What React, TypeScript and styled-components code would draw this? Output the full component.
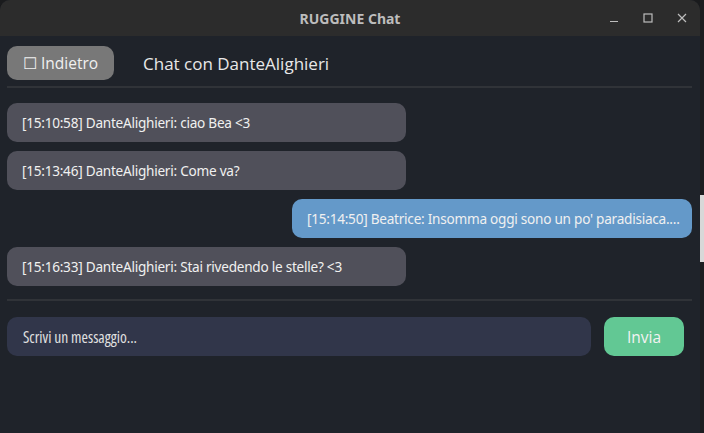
import styled, { createGlobalStyle } from 'styled-components'

const GlobalStyle = createGlobalStyle`
  html, body {
    margin: 0;
    padding: 0;
    background: #1a1b1d;
  }
  body {
    font-family: 'Noto Sans', 'DejaVu Sans', sans-serif;
  }
`

type Message = {
  time: string
  author: string
  text: string
  mine?: boolean
}

const messages: Message[] = [
  { time: '15:10:58', author: 'DanteAlighieri', text: 'ciao Bea <3' },
  { time: '15:13:46', author: 'DanteAlighieri', text: 'Come va?' },
  { time: '15:14:50', author: 'Beatrice', text: "Insomma oggi sono un po' paradisiaca....", mine: true },
  { time: '15:16:33', author: 'DanteAlighieri', text: 'Stai rivedendo le stelle? <3' },
]

const uiFont = `'Open Sans', 'Noto Sans', sans-serif`

export default function App() {
  return (
    <>
      <GlobalStyle />
      <Desktop>
        <Window>
          <TitleBar>
            <Title>RUGGINE Chat</Title>
            <Controls>
              <ControlButton aria-label="minimize">
                <svg width="10" height="10" viewBox="0 0 10 10">
                  <path d="M1 8.5h8" stroke="#bdbdbd" strokeWidth="1.2" />
                </svg>
              </ControlButton>
              <ControlButton aria-label="maximize">
                <svg width="10" height="10" viewBox="0 0 10 10">
                  <rect x="1" y="1" width="8" height="8" fill="none" stroke="#bdbdbd" strokeWidth="1.2" />
                </svg>
              </ControlButton>
              <ControlButton aria-label="close">
                <svg width="10" height="10" viewBox="0 0 10 10">
                  <path d="M1 1l8 8M9 1l-8 8" stroke="#bdbdbd" strokeWidth="1.2" />
                </svg>
              </ControlButton>
            </Controls>
          </TitleBar>

          <Body>
            <Header>
              <BackButton>☐ Indietro</BackButton>
              <ChatTitle>Chat con DanteAlighieri</ChatTitle>
            </Header>
            <Divider $top={6} />

            <MessageList>
              {messages.map((m) => (
                <Bubble key={m.time} $mine={m.mine}>
                  [{m.time}] {m.author}: {m.text}
                </Bubble>
              ))}
            </MessageList>
            <Divider $top={0} />

            <Composer>
              <MessageInput placeholder="Scrivi un messaggio..." />
              <SendButton>Invia</SendButton>
            </Composer>
          </Body>
        </Window>
        <Edge>
          <EdgeGlimpse />
        </Edge>
      </Desktop>
    </>
  )
}

const Desktop = styled.div`
  display: flex;
  width: 704px;
  height: 433px;
  overflow: hidden;
`

const Window = styled.div`
  display: flex;
  flex-direction: column;
  width: 700px;
  height: 433px;
  border-radius: 10px 10px 0 0;
  overflow: hidden;
  background: #1f232a;
`

const TitleBar = styled.div`
  position: relative;
  display: flex;
  align-items: center;
  justify-content: center;
  height: 36px;
  flex-shrink: 0;
  background: #2c2c2c;
`

const Title = styled.div`
  font-family: 'Noto Sans', sans-serif;
  font-weight: 700;
  font-size: 14px;
  color: #bdbdbd;
`

const Controls = styled.div`
  position: absolute;
  right: 9px;
  top: 0;
  bottom: 0;
  display: flex;
  align-items: center;
  gap: 16px;
`

const ControlButton = styled.div`
  display: flex;
  align-items: center;
  justify-content: center;
  width: 18px;
  height: 18px;
`

const Body = styled.div`
  display: flex;
  flex-direction: column;
  padding: 10px 8px 0 7px;
`

const Header = styled.div`
  display: flex;
  align-items: center;
  gap: 29px;
  height: 34px;
`

const BackButton = styled.button`
  height: 34px;
  width: 107px;
  border: none;
  border-radius: 10px;
  background: #787878;
  color: #f0f0f0;
  font-family: ${uiFont};
  font-size: 15.5px;
  padding: 0;
`

const ChatTitle = styled.div`
  font-family: ${uiFont};
  font-size: 17px;
  color: #e8e8e8;
`

const Divider = styled.hr<{ $top: number }>`
  margin: ${(p) => p.$top}px 0 0;
  height: 2px;
  border: none;
  background: #303338;
`

const MessageList = styled.div`
  display: flex;
  flex-direction: column;
  gap: 9px;
  padding: 15px 0 13px;
`

const Bubble = styled.div<{ $mine?: boolean }>`
  display: flex;
  align-items: center;
  box-sizing: border-box;
  width: ${(p) => (p.$mine ? '400px' : '399px')};
  height: 39px;
  padding: 0 15px;
  align-self: ${(p) => (p.$mine ? 'flex-end' : 'flex-start')};
  border-radius: 10px;
  background: ${(p) => (p.$mine ? '#6499c9' : '#50505a')};
  color: #f0f0f0;
  font-family: 'Noto Sans', sans-serif;
  font-size: 13.6px;
  letter-spacing: -0.25px;
  white-space: nowrap;
  overflow: hidden;
`

const Composer = styled.div`
  display: flex;
  align-items: center;
  gap: 13px;
  margin-top: 16px;
  padding-right: 8px;
`

const MessageInput = styled.input`
  flex: 1;
  height: 39px;
  box-sizing: border-box;
  border: none;
  border-radius: 10px;
  background: #31364a;
  padding: 0 16px;
  font-family: ${uiFont};
  font-stretch: 75%;
  font-size: 15.5px;
  color: #e6e6e6;
  outline: none;

  &::placeholder {
    color: #e0e0e0;
  }
`

const SendButton = styled.button`
  width: 80px;
  height: 39px;
  border: none;
  border-radius: 10px;
  background: #62c894;
  color: #f2f2f2;
  font-family: ${uiFont};
  font-size: 15.5px;
  padding: 0;
`

const Edge = styled.div`
  width: 4px;
  padding-top: 195px;
  background: #1c1d20;
`

const EdgeGlimpse = styled.div`
  height: 67px;
  background: #d8d8d8;
`
